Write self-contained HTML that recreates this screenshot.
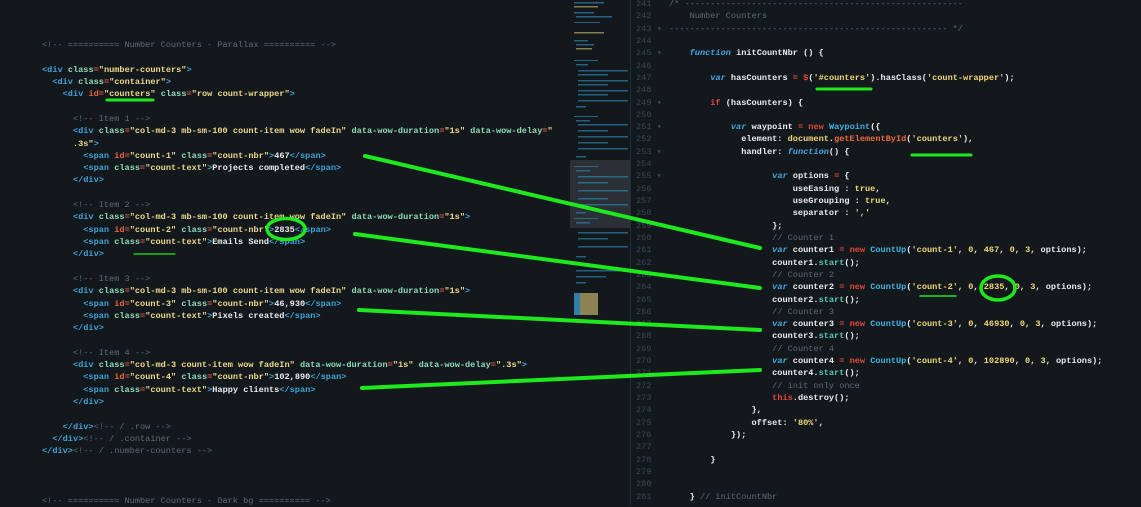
<!DOCTYPE html>
<html><head><meta charset="utf-8"><style>
html,body{margin:0;padding:0;}
body{width:1141px;height:505px;background:#13181d;position:relative;overflow:hidden;font-family:"Liberation Mono","DejaVu Sans Mono",monospace;font-size:8.6px;}
pre{margin:0;position:absolute;font-family:inherit;font-size:8.6px;line-height:12.32px;color:#ececec;white-space:pre;font-weight:bold;}
.tg{color:#3fa3d6}.at{color:#8fdcb8}.id{color:#e8683c}.st{color:#eed88c}.cm{color:#5f6a74;font-weight:normal}.eq{color:#e05a4a}
.k{color:#46a6e0;font-style:italic}.r{color:#e2483a}.f{color:#3fb4e0}.s{color:#f2d776}.m{color:#57c6b8}.o{color:#ec6a3c}
#mini{position:absolute;left:570px;top:0;width:60px;height:505px;}
#div{position:absolute;left:630px;top:0;width:1px;height:505px;background:#262e35;}
</style></head><body>
<pre style="left:42px;top:39px"><span class="cm">&lt;!-- ========== Number Counters - Parallax ========== --&gt;</span>

<span class="tg">&lt;div</span> <span class="at">class</span><span class="eq">=</span><span class="st">"number-counters"</span><span class="tg">&gt;</span>
  <span class="tg">&lt;div</span> <span class="at">class</span><span class="eq">=</span><span class="st">"container"</span><span class="tg">&gt;</span>
    <span class="tg">&lt;div</span> <span class="id">id</span><span class="eq">=</span><span class="st">"counters"</span> <span class="at">class</span><span class="eq">=</span><span class="st">"row count-wrapper"</span><span class="tg">&gt;</span>

      <span class="cm">&lt;!-- Item 1 --&gt;</span>
      <span class="tg">&lt;div</span> <span class="at">class</span><span class="eq">=</span><span class="st">"col-md-3 mb-sm-100 count-item wow fadeIn"</span> <span class="at">data-wow-duration</span><span class="eq">=</span><span class="st">"1s"</span> <span class="at">data-wow-delay</span><span class="eq">=</span><span class="st">"</span>
<span class="st">      .3s"</span><span class="tg">&gt;</span>
        <span class="tg">&lt;span</span> <span class="id">id</span><span class="eq">=</span><span class="st">"count-1"</span> <span class="at">class</span><span class="eq">=</span><span class="st">"count-nbr"</span><span class="tg">&gt;</span>467<span class="tg">&lt;/span&gt;</span>
        <span class="tg">&lt;span</span> <span class="at">class</span><span class="eq">=</span><span class="st">"count-text"</span><span class="tg">&gt;</span>Projects completed<span class="tg">&lt;/span&gt;</span>
      <span class="tg">&lt;/div&gt;</span>

      <span class="cm">&lt;!-- Item 2 --&gt;</span>
      <span class="tg">&lt;div</span> <span class="at">class</span><span class="eq">=</span><span class="st">"col-md-3 mb-sm-100 count-item wow fadeIn"</span> <span class="at">data-wow-duration</span><span class="eq">=</span><span class="st">"1s"</span><span class="tg">&gt;</span>
        <span class="tg">&lt;span</span> <span class="id">id</span><span class="eq">=</span><span class="st">"count-2"</span> <span class="at">class</span><span class="eq">=</span><span class="st">"count-nbr"</span><span class="tg">&gt;</span>2835<span class="tg">&lt;/span&gt;</span>
        <span class="tg">&lt;span</span> <span class="at">class</span><span class="eq">=</span><span class="st">"count-text"</span><span class="tg">&gt;</span>Emails Send<span class="tg">&lt;/span&gt;</span>
      <span class="tg">&lt;/div&gt;</span>

      <span class="cm">&lt;!-- Item 3 --&gt;</span>
      <span class="tg">&lt;div</span> <span class="at">class</span><span class="eq">=</span><span class="st">"col-md-3 mb-sm-100 count-item wow fadeIn"</span> <span class="at">data-wow-duration</span><span class="eq">=</span><span class="st">"1s"</span><span class="tg">&gt;</span>
        <span class="tg">&lt;span</span> <span class="id">id</span><span class="eq">=</span><span class="st">"count-3"</span> <span class="at">class</span><span class="eq">=</span><span class="st">"count-nbr"</span><span class="tg">&gt;</span>46,930<span class="tg">&lt;/span&gt;</span>
        <span class="tg">&lt;span</span> <span class="at">class</span><span class="eq">=</span><span class="st">"count-text"</span><span class="tg">&gt;</span>Pixels created<span class="tg">&lt;/span&gt;</span>
      <span class="tg">&lt;/div&gt;</span>

      <span class="cm">&lt;!-- Item 4 --&gt;</span>
      <span class="tg">&lt;div</span> <span class="at">class</span><span class="eq">=</span><span class="st">"col-md-3 count-item wow fadeIn"</span> <span class="at">data-wow-duration</span><span class="eq">=</span><span class="st">"1s"</span> <span class="at">data-wow-delay</span><span class="eq">=</span><span class="st">".3s"</span><span class="tg">&gt;</span>
        <span class="tg">&lt;span</span> <span class="id">id</span><span class="eq">=</span><span class="st">"count-4"</span> <span class="at">class</span><span class="eq">=</span><span class="st">"count-nbr"</span><span class="tg">&gt;</span>102,890<span class="tg">&lt;/span&gt;</span>
        <span class="tg">&lt;span</span> <span class="at">class</span><span class="eq">=</span><span class="st">"count-text"</span><span class="tg">&gt;</span>Happy clients<span class="tg">&lt;/span&gt;</span>
      <span class="tg">&lt;/div&gt;</span>

    <span class="tg">&lt;/div&gt;</span><span class="cm">&lt;!-- / .row --&gt;</span>
  <span class="tg">&lt;/div&gt;</span><span class="cm">&lt;!-- / .container --&gt;</span>
<span class="tg">&lt;/div&gt;</span><span class="cm">&lt;!-- / .number-counters --&gt;</span>



<span class="cm">&lt;!-- ========== Number Counters - Dark bg ========== --&gt;</span></pre>

<svg id="mini" width="60" height="505" viewBox="0 0 60 505">
<rect x="0" y="160" width="60" height="68" fill="#2a3036"/>
<g fill="#2f7fa8" opacity="0.7">
<rect x="4" y="2" width="30" height="1.5"/><rect x="4" y="6" width="24" height="1.5" fill="#b9a868"/><rect x="4" y="12" width="20" height="1.5"/><rect x="6" y="16" width="36" height="1.5"/><rect x="4" y="22" width="26" height="1"/>
<rect x="4" y="32" width="30" height="1.5" fill="#b9a868"/><rect x="4" y="40" width="14" height="1.5"/><rect x="6" y="44" width="18" height="1.5"/><rect x="6" y="48" width="16" height="1.5" fill="#b9a868"/>
<rect x="4" y="60" width="24" height="1"/><rect x="6" y="64" width="12" height="1.5"/><rect x="8" y="70" width="50" height="1.5"/><rect x="8" y="74" width="30" height="1.5"/><rect x="8" y="80" width="50" height="1.5"/><rect x="8" y="84" width="30" height="1.5"/><rect x="8" y="90" width="50" height="1.5"/><rect x="8" y="94" width="30" height="1.5"/><rect x="8" y="100" width="50" height="1.5"/><rect x="6" y="106" width="10" height="1.5"/>
<rect x="4" y="116" width="24" height="1"/><rect x="6" y="120" width="14" height="1.5"/><rect x="8" y="124" width="50" height="1.5"/><rect x="8" y="130" width="30" height="1.5"/><rect x="8" y="136" width="50" height="1.5"/><rect x="8" y="142" width="30" height="1.5"/><rect x="8" y="148" width="50" height="1.5"/><rect x="6" y="156" width="10" height="1.5"/>
<rect x="4" y="166" width="24" height="1"/><rect x="6" y="170" width="14" height="1.5"/><rect x="8" y="176" width="50" height="1.5"/><rect x="8" y="182" width="30" height="1.5"/><rect x="8" y="190" width="50" height="1.5"/><rect x="8" y="198" width="30" height="1.5"/><rect x="8" y="204" width="50" height="1.5"/><rect x="6" y="212" width="10" height="1.5"/>
<rect x="4" y="218" width="24" height="1"/><rect x="6" y="222" width="14" height="1.5"/><rect x="8" y="232" width="50" height="1.5"/><rect x="8" y="238" width="30" height="1.5"/><rect x="8" y="246" width="50" height="1.5"/><rect x="6" y="256" width="10" height="1.5"/>
<rect x="6" y="270" width="50" height="1.5"/><rect x="6" y="276" width="30" height="1.5"/><rect x="6" y="282" width="10" height="1.5"/>
</g>
<rect x="4" y="293" width="24" height="22" fill="#8d8252"/><rect x="4" y="293" width="6" height="22" fill="#2f7fa8"/>
</svg>
<div id="div"></div>

<pre style="top:-2px;left:636px;color:#3b4651;font-weight:normal">241
242
243 ▾
244
245 ▾
246
247
248
249 ▾
250
251 ▾
252
253 ▾
254
255 ▾
256
257
258
259
260
261
262
263
264
265
266
267
268
269
270
271
272
273
274
275
276
277
278
279
280
281</pre>

<pre style="left:669px;top:-2px"><span class="cm">/* ------------------------------------------------------</span>
<span class="cm">    Number Counters</span>
<span class="cm">------------------------------------------------------ */</span>

    <span class="k">function</span> initCountNbr () {

        <span class="k">var</span> hasCounters <span class="r">=</span> <span class="r">$</span>(<span class="s">'#counters'</span>).hasClass(<span class="s">'count-wrapper'</span>);

        <span class="r">if</span> (hasCounters) {

            <span class="k">var</span> waypoint <span class="r">=</span> <span class="r">new</span> <span class="f">Waypoint</span>({
              element: <span class="s">document</span>.<span class="o">getElementById</span>(<span class="s">'counters'</span>),
              handler: <span class="k">function</span>() {

                    <span class="k">var</span> options <span class="r">=</span> {
                        useEasing : <span class="s">true</span>,
                        useGrouping : <span class="s">true</span>,
                        separator : <span class="s">','</span>
                    };
                    <span class="cm">// Counter 1</span>
                    <span class="k">var</span> counter1 <span class="r">=</span> <span class="r">new</span> <span class="f">CountUp</span>(<span class="s">'count-1'</span>, <span class="s">0</span>, <span class="s">467</span>, <span class="s">0</span>, <span class="s">3</span>, options);
                    counter1.<span class="m">start</span>();
                    <span class="cm">// Counter 2</span>
                    <span class="k">var</span> counter2 <span class="r">=</span> <span class="r">new</span> <span class="f">CountUp</span>(<span class="s">'count-2'</span>, <span class="s">0</span>, <span class="s">2835</span>, <span class="s">0</span>, <span class="s">3</span>, options);
                    counter2.<span class="m">start</span>();
                    <span class="cm">// Counter 3</span>
                    <span class="k">var</span> counter3 <span class="r">=</span> <span class="r">new</span> <span class="f">CountUp</span>(<span class="s">'count-3'</span>, <span class="s">0</span>, <span class="s">46930</span>, <span class="s">0</span>, <span class="s">3</span>, options);
                    counter3.<span class="m">start</span>();
                    <span class="cm">// Counter 4</span>
                    <span class="k">var</span> counter4 <span class="r">=</span> <span class="r">new</span> <span class="f">CountUp</span>(<span class="s">'count-4'</span>, <span class="s">0</span>, <span class="s">102890</span>, <span class="s">0</span>, <span class="s">3</span>, options);
                    counter4.<span class="m">start</span>();
                    <span class="cm">// init only once</span>
                    <span class="r">this</span>.destroy();
                },
                offset: <span class="s">'80%'</span>,
            });

        }


    } <span class="cm">// initCountNbr</span></pre>

<svg style="position:absolute;left:0;top:0" width="1141" height="505" viewBox="0 0 1141 505">
<g stroke="#1ee81e" stroke-linecap="round" fill="none">
<line x1="365" y1="156" x2="760" y2="248" stroke-width="4"/>
<line x1="355" y1="234" x2="760" y2="288" stroke-width="4"/>
<line x1="359" y1="310" x2="760" y2="330" stroke-width="4"/>
<line x1="362" y1="388" x2="760" y2="370" stroke-width="4"/>
<line x1="107" y1="100" x2="153" y2="100" stroke-width="3"/>
<line x1="817" y1="89" x2="871" y2="89" stroke-width="3"/>
<line x1="912" y1="155" x2="971" y2="155" stroke-width="3"/>
<line x1="920" y1="296" x2="956" y2="296" stroke-width="1.5"/>
<line x1="134" y1="254" x2="175" y2="254" stroke-width="1.2"/>
<ellipse cx="286" cy="229" rx="19" ry="10.5" stroke-width="3.5"/>
<ellipse cx="998" cy="288" rx="17" ry="12" stroke-width="3.5"/>
</g>
</svg>
</body></html>
